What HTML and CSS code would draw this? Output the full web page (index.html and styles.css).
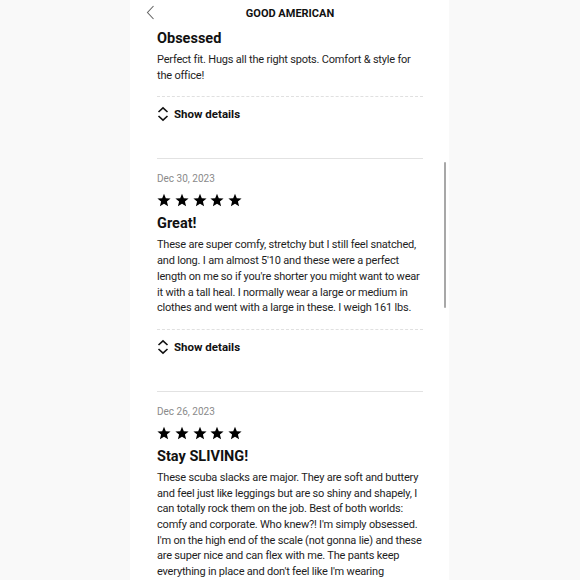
FILE: index.html
```html
<!DOCTYPE html>
<html lang="en">
<head>
<meta charset="utf-8">
<title>Good American Reviews</title>
<link rel="stylesheet" href="styles.css">
</head>
<body>
<div class="screen">
  <header class="topbar">
    <svg class="back" width="9" height="15" viewBox="0 0 9 15"><path d="M7.5 1 L1.5 7.5 L7.5 14" fill="none" stroke="#666" stroke-width="1.1"/></svg>
    <div class="brand">GOOD AMERICAN</div>
  </header>

  <div class="scrollbar"></div>

  <section class="review first">
    <h2 class="title">Obsessed</h2>
    <p class="body">Perfect fit. Hugs all the right spots. Comfort &amp; style for the office!</p>
    <div class="dotted"></div>
    <div class="details">
      <svg width="12" height="16" viewBox="0 0 12 16"><path d="M1.5 6 L6 1.8 L10.5 6 M1.5 10 L6 14.2 L10.5 10" fill="none" stroke="#111" stroke-width="1.6"/></svg>
      <span>Show details</span>
    </div>
  </section>

  <section class="review">
    <div class="date">Dec 30, 2023</div>
    <div class="stars">
      <svg viewBox="0 0 24 24"><path d="M12 1.2l3.1 7.6 8.2.6-6.3 5.3 2 8-7-4.4-7 4.4 2-8L.7 9.4l8.2-.6z"/></svg>
      <svg viewBox="0 0 24 24"><path d="M12 1.2l3.1 7.6 8.2.6-6.3 5.3 2 8-7-4.4-7 4.4 2-8L.7 9.4l8.2-.6z"/></svg>
      <svg viewBox="0 0 24 24"><path d="M12 1.2l3.1 7.6 8.2.6-6.3 5.3 2 8-7-4.4-7 4.4 2-8L.7 9.4l8.2-.6z"/></svg>
      <svg viewBox="0 0 24 24"><path d="M12 1.2l3.1 7.6 8.2.6-6.3 5.3 2 8-7-4.4-7 4.4 2-8L.7 9.4l8.2-.6z"/></svg>
      <svg viewBox="0 0 24 24"><path d="M12 1.2l3.1 7.6 8.2.6-6.3 5.3 2 8-7-4.4-7 4.4 2-8L.7 9.4l8.2-.6z"/></svg>
    </div>
    <h2 class="title">Great!</h2>
    <p class="body">These are super comfy, stretchy but I still feel snatched, and long. I am almost 5'10 and these were a perfect length on me so if you're shorter you might want to wear it with a tall heal. I normally wear a large or medium in clothes and went with a large in these. I weigh 161 lbs.</p>
    <div class="dotted"></div>
    <div class="details">
      <svg width="12" height="16" viewBox="0 0 12 16"><path d="M1.5 6 L6 1.8 L10.5 6 M1.5 10 L6 14.2 L10.5 10" fill="none" stroke="#111" stroke-width="1.6"/></svg>
      <span>Show details</span>
    </div>
  </section>

  <section class="review last">
    <div class="date">Dec 26, 2023</div>
    <div class="stars">
      <svg viewBox="0 0 24 24"><path d="M12 1.2l3.1 7.6 8.2.6-6.3 5.3 2 8-7-4.4-7 4.4 2-8L.7 9.4l8.2-.6z"/></svg>
      <svg viewBox="0 0 24 24"><path d="M12 1.2l3.1 7.6 8.2.6-6.3 5.3 2 8-7-4.4-7 4.4 2-8L.7 9.4l8.2-.6z"/></svg>
      <svg viewBox="0 0 24 24"><path d="M12 1.2l3.1 7.6 8.2.6-6.3 5.3 2 8-7-4.4-7 4.4 2-8L.7 9.4l8.2-.6z"/></svg>
      <svg viewBox="0 0 24 24"><path d="M12 1.2l3.1 7.6 8.2.6-6.3 5.3 2 8-7-4.4-7 4.4 2-8L.7 9.4l8.2-.6z"/></svg>
      <svg viewBox="0 0 24 24"><path d="M12 1.2l3.1 7.6 8.2.6-6.3 5.3 2 8-7-4.4-7 4.4 2-8L.7 9.4l8.2-.6z"/></svg>
    </div>
    <h2 class="title">Stay SLIVING!</h2>
    <p class="body">These scuba slacks are major. They are soft and buttery and feel just like leggings but are so shiny and shapely, I can totally rock them on the job. Best of both worlds: comfy and corporate. Who knew?! I'm simply obsessed. I'm on the high end of the scale (not gonna lie) and these are super nice and can flex with me. The pants keep everything in place and don't feel like I'm wearing</p>
  </section>
</div>
</body>
</html>
```
FILE: styles.css
```css
html, body {
  margin: 0;
  padding: 0;
  height: 580px;
  overflow: hidden;
  background: #f9f9f9;
}
body {
  font-family: Roboto, "Liberation Sans", sans-serif;
  color: #1c1c1c;
}
.screen {
  position: relative;
  width: 319px;
  height: 580px;
  margin-left: 130px;
  background: #fff;
  overflow: hidden;
}
.topbar {
  position: relative;
  height: 26px;
  display: flex;
  align-items: center;
  justify-content: center;
}
.back {
  position: absolute;
  left: 16px;
  top: 5px;
}
.brand {
  font-size: 11px;
  font-weight: 700;
  color: #111;
  margin-left: 1px;
  padding-top: 1px;
}
.scrollbar {
  position: absolute;
  left: 314px;
  top: 162px;
  width: 2px;
  height: 146px;
  background: #a8a8a8;
  border-radius: 1px;
}
.review {
  margin: 0 26px 0 27px;
  padding: 13px 0 36px;
  border-top: 1px solid #e2e2e2;
}
.review.first {
  border-top: none;
  padding-top: 4px;
}
.review.last {
  padding-bottom: 0;
}
.date {
  font-size: 10px;
  line-height: 14px;
  color: #8a8a8a;
}
.stars {
  display: flex;
  gap: 3.75px;
  margin-top: 7px;
  height: 15px;
}
.stars svg {
  width: 14px;
  height: 14px;
  fill: #000;
}
.title {
  margin: 7px 0 0;
  font-size: 14.5px;
  line-height: 18px;
  font-weight: 700;
  color: #111;
}
.first .title {
  margin-top: 0;
}
.body {
  margin: 4px 0 0;
  font-size: 11px;
  line-height: 15.7px;
  letter-spacing: -0.2px;
  color: #1e1e1e;
}
.dotted {
  margin-top: 13px;
  border-top: 1px dashed #e0e0e0;
}
.details {
  display: flex;
  align-items: center;
  gap: 5px;
  margin-top: 9px;
  height: 16px;
  font-size: 11.5px;
  font-weight: 700;
  color: #111;
}
.details svg {
  flex: none;
}
```
